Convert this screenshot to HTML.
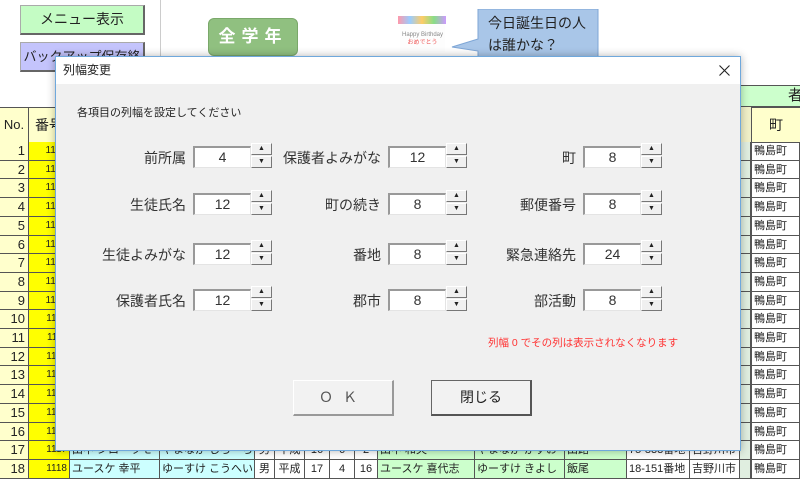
<!DOCTYPE html><html><head><meta charset="utf-8"><style>
*{margin:0;padding:0;box-sizing:border-box}
body{width:800px;height:480px;overflow:hidden;background:#fff;position:relative;font-family:"Liberation Sans","Noto Sans CJK JP",sans-serif;color:#222}
.a{position:absolute}
.c{position:absolute;border-right:1px solid #555;border-bottom:1px solid #555;font-size:11px;line-height:18px;white-space:nowrap;overflow:hidden;padding-left:2px}
.lb{position:absolute;font-size:14px;text-align:right;width:150px;color:#333}
.tb{position:absolute;width:58px;height:22px;background:#fff;border-top:2px solid #999;border-left:2px solid #999;border-right:1px solid #e4e4e4;border-bottom:1px solid #e4e4e4;text-align:center;font-size:14px;line-height:19px;color:#333}
.sp{position:absolute;width:21px;height:12px;background:#f0f0f0;border:1px solid #fff;border-right-color:#777;border-bottom-color:#777;font-size:7px;text-align:center;line-height:10px}
</style></head><body>
<div class="a" style="left:20px;top:5px;width:125px;height:30px;background:#c4fcc4;border:1px solid #aaa;border-right:2px solid #666;border-bottom:2px solid #666;font-size:14px;text-align:center;line-height:27px">メニュー表示</div>
<div class="a" style="left:20px;top:42px;width:125px;height:30px;background:#c4c4fc;border:1px solid #aaa;border-right:2px solid #666;border-bottom:2px solid #666;font-size:13px;text-align:center;line-height:27px">バックアップ保存終了</div>
<div class="a" style="left:160px;top:0;width:1px;height:106px;background:#ccc"></div>
<div class="a" style="left:208px;top:18px;width:90px;height:38px;border-radius:6px;background:#90c080;border:1px solid #7aa86a;color:#fff;font-weight:bold;font-size:17px;text-align:center;line-height:36px;letter-spacing:6px">全学年</div>
<div class="a" style="left:400px;top:22px;width:45px;height:30px;background:#fdfdfd;font-size:6px;color:#e55;text-align:center;line-height:8px;padding-top:9px"><span style="color:#888">Happy Birthday</span><br>おめでとう</div>
<div class="a" style="left:398px;top:16px;width:48px;height:8px;background:linear-gradient(90deg,#f9a,#9cf,#fc6,#8d8,#c9f)"></div>
<svg class="a" style="left:450px;top:9px" width="150" height="50"><polygon points="28,0 148,0 148,48 28,48 28,42 2,38 28,30" fill="#a9c6e8" stroke="#7ea6d6"/></svg>
<div class="a" style="left:488px;top:12px;font-size:14px;line-height:22px">今日誕生日の人<br>は誰かな？</div>
<div class="a" style="left:740px;top:85px;width:60px;height:22px;background:#ccffcc;border-top:1px solid #555;border-bottom:1px solid #555;font-size:15px;line-height:20px;padding-left:48px">者</div>
<div class="a" style="left:0;top:107px;width:800px;height:36px;background:#ffffcc;border-top:1px solid #555;border-bottom:1px solid #555"></div>
<div class="a" style="left:0;top:107px;width:29px;height:36px;border-right:1px solid #555;font-size:13px;line-height:36px;text-align:center">No.</div>
<div class="a" style="left:29px;top:107px;width:40px;height:36px;border-right:1px solid #555;font-size:14px;line-height:36px;padding-left:6px">番号</div>
<div class="a" style="left:740px;top:107px;width:11px;height:36px;background:#f0f0c8"></div>
<div class="a" style="left:751px;top:107px;width:49px;height:36px;border-left:1px solid #555;font-size:14px;line-height:36px;text-align:center">町</div>
<div id="rows"></div>
<script>
var h='';
function Y(i){return Math.round(142+(i-1)*18.7);}
for(var i=1;i<=18;i++){var y=Y(i),hh=Y(i+1)-y;
h+='<div class="c" style="left:0;top:'+y+'px;width:29px;height:'+hh+'px;background:#ffffcc;text-align:right;padding-right:3px;font-size:13px">'+i+'</div>';
h+='<div class="c" style="left:29px;top:'+y+'px;width:41px;height:'+hh+'px;background:#ffff00;text-align:right;padding-right:2px;font-size:10px">'+(1100+i)+'</div>';
h+='<div class="c" style="left:740px;top:'+y+'px;width:11px;height:'+hh+'px;background:#e0eee0"></div>';
h+='<div class="c" style="left:751px;top:'+y+'px;width:49px;height:'+hh+'px;border-left:1px solid #555">鴨島町</div>';}
var r=[[70,90,'#ccffff'],[160,95,'#ccffff'],[255,20,'#fff'],[275,30,'#fff'],[305,25,'#fff'],[330,25,'#fff'],[355,23,'#fff'],[378,97,'#ccffcc'],[475,90,'#ccffcc'],[565,62,'#ccffcc'],[627,63,'#fff'],[690,50,'#fff']];
var d=[['山中 ジローラモ','やまなか じろーらも','男','平成','16','6','2','山中 和夫','やまなか かずお','山路','75-833番地','吉野川市'],['ユースケ 幸平','ゆーすけ こうへい','男','平成','17','4','16','ユースケ 喜代志','ゆーすけ きよし','飯尾','18-151番地','吉野川市']];
for(var k=0;k<2;k++){var y=Y(17+k),hh=Y(18+k)-y;for(var j=0;j<r.length;j++)h+='<div class="c" style="left:'+r[j][0]+'px;top:'+y+'px;width:'+r[j][1]+'px;height:'+hh+'px;background:'+r[j][2]+';'+(j>=2&&j<=6?'text-align:center;padding:0':'')+'">'+d[k][j]+'</div>';}
document.getElementById('rows').innerHTML=h;
</script>
<div class="a" style="left:55px;top:56px;width:686px;height:395px;background:#f0f0f0;border:1px solid #6fa8dc;box-shadow:0 0 8px rgba(0,0,0,.3)">
<div style="height:27px;background:#fff;font-size:12px;line-height:27px;padding-left:7px">列幅変更
<svg style="position:absolute;right:10px;top:8px" width="11" height="11"><path d="M0.5 0.5L10.5 10.5M10.5 0.5L0.5 10.5" stroke="#222" stroke-width="1.1"/></svg></div>
<div class="a" style="left:21px;top:47px;font-size:11px">各項目の列幅を設定してください</div>
<div id="f"></div>
<div class="a" style="left:432px;top:278px;font-size:10.5px;color:#f33">列幅 0 でその列は表示されなくなります</div>
<div class="a" style="left:237px;top:323px;width:101px;height:36px;background:#f2f2f2;border:1px solid #fff;border-right:2px solid #999;border-bottom:2px solid #999;font-size:14px;text-align:center;line-height:32px;color:#555;letter-spacing:10px">ＯＫ</div>
<div class="a" style="left:375px;top:323px;width:101px;height:36px;background:#f2f2f2;border:1px solid #666;border-right:2px solid #555;border-bottom:2px solid #555;font-size:14px;text-align:center;line-height:32px">閉じる</div>
</div>
<script>
var L=[['前所属','4','保護者よみがな','12','町','8'],['生徒氏名','12','町の続き','8','郵便番号','8'],['生徒よみがな','12','番地','8','緊急連絡先','24'],['保護者氏名','12','郡市','8','部活動','8']];
var X=[137,332,527],YY=[145,192,242,288],h='';
for(var i=0;i<4;i++)for(var j=0;j<3;j++){var x=X[j],y=YY[i]-56;
h+='<div class="lb" style="left:'+(x-157)+'px;top:'+(y+2)+'px">'+L[i][j*2]+'</div>';
h+='<div class="tb" style="left:'+x+'px;top:'+y+'px">'+L[i][j*2+1]+'</div>';
h+='<div class="sp" style="left:'+(x+58)+'px;top:'+(y-3)+'px">▲</div><div class="sp" style="left:'+(x+58)+'px;top:'+(y+10)+'px">▼</div>';}
document.getElementById('f').innerHTML=h;
</script>
</body></html>
